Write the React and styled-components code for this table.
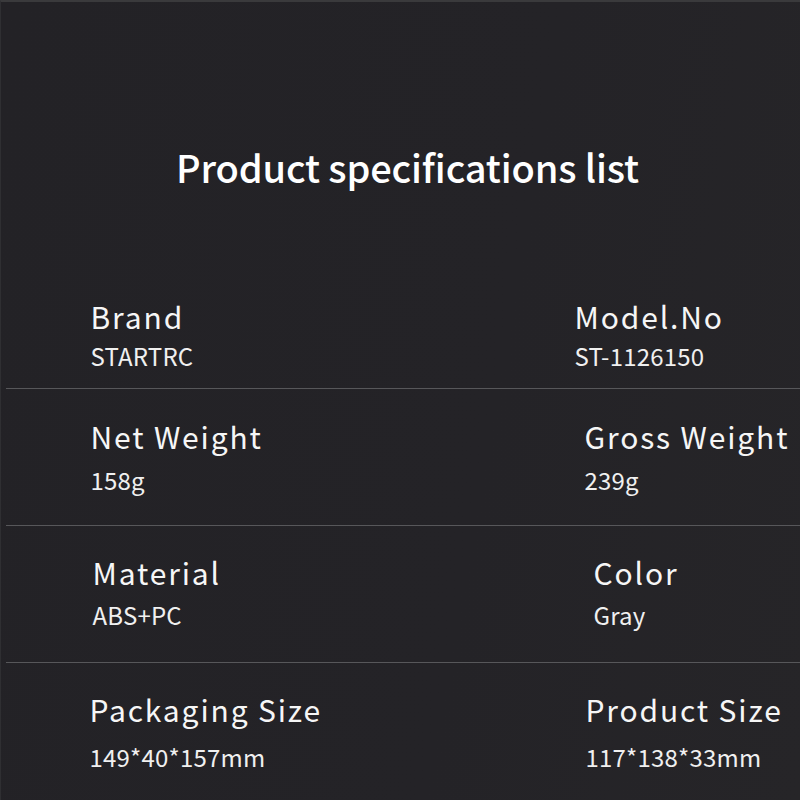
import React from 'react';
import styled, { createGlobalStyle } from 'styled-components';

const GlobalStyle = createGlobalStyle`
	html, body {
		margin: 0;
		padding: 0;
		background: #242327;
	}
	* {
		box-sizing: border-box;
	}
`;

const specs = [
	{ left: ['Brand', 'STARTRC'], right: ['Model.No', 'ST-1126150'], x: [91, 575], pt: 0, gap: 13, pb: 20 },
	{ left: ['Net Weight', '158g'], right: ['Gross Weight', '239g'], x: [91, 585], pt: 32, gap: 17, pb: 33 },
	{ left: ['Material', 'ABS+PC'], right: ['Color', 'Gray'], x: [93, 594], pt: 31, gap: 16, pb: 35 },
	{ left: ['Packaging Size', '149*40*157mm'], right: ['Product Size', '117*138*33mm'], x: [90, 586], pt: 31, gap: 21, pb: 0, last: true },
];

const SpecCell = ({ label, value, gap }) => (
	<Cell>
		<Label>{label}</Label>
		<Value $gap={gap}>{value}</Value>
	</Cell>
);

const App = () => {
	return (
		<>
			<GlobalStyle />
			<Page>
				<Title>Product specifications list</Title>
				<List>
					{specs.map((row) => (
						<Row key={row.left[0]} $pt={row.pt} $pb={row.pb} $last={row.last}>
							<Column $x={row.x[0]} $w={row.x[1] - row.x[0]}>
								<SpecCell label={row.left[0]} value={row.left[1]} gap={row.gap} />
							</Column>
							<Column $x={0}>
								<SpecCell label={row.right[0]} value={row.right[1]} gap={row.gap} />
							</Column>
						</Row>
					))}
				</List>
			</Page>
		</>
	);
};

export default App;

const Page = styled.div`
	width: 800px;
	height: 800px;
	overflow: hidden;
	background: linear-gradient(100deg, #232226 0%, #242327 60%, #262528 100%);
	border-top: 2px solid #3a3a3c;
	border-left: 1px solid #2f2f32;
	padding-top: 146px;
	font-family: 'Noto Sans CJK SC', 'Noto Sans', sans-serif;
	color: #f4f4f4;
`;

const Title = styled.h1`
	margin: 0 0 0 14px;
	font-size: 38px;
	line-height: 38px;
	letter-spacing: -0.15px;
	font-weight: 500;
	text-align: center;
	color: #ffffff;
`;

const List = styled.div`
	margin-top: 115px;
	display: flex;
	flex-direction: column;
`;

const Row = styled.div`
	display: flex;
	margin-left: 5px;
	padding-top: ${(p) => p.$pt}px;
	padding-bottom: ${(p) => p.$pb}px;
	border-bottom: ${(p) => (p.$last ? 'none' : '1px solid #57575a')};
`;

const Column = styled.div`
	padding-left: ${(p) => (p.$x ? p.$x - 6.5 : 0)}px;
	width: ${(p) => (p.$w ? `${p.$w + p.$x - 6.5}px` : 'auto')};
	flex-shrink: 0;
`;

const Cell = styled.div`
	display: flex;
	flex-direction: column;
	white-space: nowrap;
`;

const Label = styled.div`
	font-size: 30px;
	line-height: 30px;
	letter-spacing: 1.85px;
	font-weight: 400;
	color: #f6f6f6;
`;

const Value = styled.div`
	margin-top: ${(p) => p.$gap}px;
	font-size: 24px;
	line-height: 24px;
	letter-spacing: 0.2px;
	color: #f0f0f0;
`;
